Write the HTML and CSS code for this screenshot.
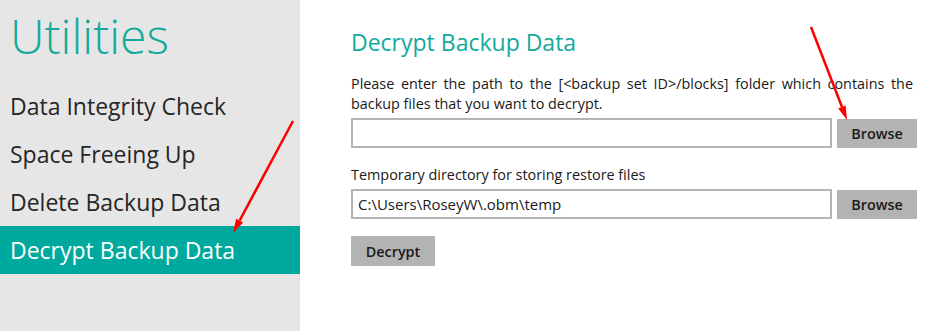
FILE: index.html
```html
<!DOCTYPE html>
<html lang="en">
<head>
    <meta charset="UTF-8">
    <meta name="viewport" content="width=device-width, initial-scale=1.0">
    <title>Utilities - Decrypt Backup Data</title>
    <link rel="stylesheet" href="styles.css">
</head>
<body>
    <div class="app">
        <aside class="sidebar">
            <h1 class="sidebar-title">Utilities</h1>
            <ul class="menu">
                <li class="menu-item">Data Integrity Check</li>
                <li class="menu-item">Space Freeing Up</li>
                <li class="menu-item">Delete Backup Data</li>
                <li class="menu-item active">Decrypt Backup Data</li>
            </ul>
        </aside>

        <main class="content">
            <h2 class="content-title">Decrypt Backup Data</h2>
            <p class="hint">Please enter the path to the [&lt;backup set ID&gt;/blocks] folder which contains the backup files that you want to decrypt.</p>
            <div class="path-row">
                <input class="path-input" type="text" value="">
                <button class="btn">Browse</button>
            </div>

            <p class="label">Temporary directory for storing restore files</p>
            <div class="path-row">
                <input class="path-input" type="text" value="C:\Users\RoseyW\.obm\temp">
                <button class="btn">Browse</button>
            </div>

            <button class="btn btn-decrypt">Decrypt</button>
        </main>

        <!-- annotation arrows -->
        <svg class="arrows" width="943" height="331" viewBox="0 0 943 331">
            <line x1="293" y1="121" x2="239.6" y2="220.6" stroke="#ff0000" stroke-width="2.5"/>
            <polygon points="233,233 243.1,222.5 236.1,218.8" fill="#ff0000"/>
            <line x1="811" y1="27" x2="842" y2="107" stroke="#ff0000" stroke-width="2.5"/>
            <polygon points="847,120 845.7,105.5 838.2,108.4" fill="#ff0000"/>
        </svg>
    </div>
</body>
</html>
```

FILE: styles.css
```css
body {
    margin: 0;
    font-family: 'Open Sans', 'DejaVu Sans', sans-serif;
    background: #ffffff;
    color: #1a1a1a;
}

.app {
    position: relative;
    display: flex;
    width: 943px;
    height: 331px;
    overflow: hidden;
}

.sidebar {
    width: 300px;
    flex-shrink: 0;
    background: #e6e6e6;
}

.sidebar-title {
    margin: 0;
    padding: 5px 0 0 10px;
    height: 82px;
    box-sizing: border-box;
    font-size: 48px;
    font-weight: 300;
    color: #13aa9d;
    line-height: 62px;
}

.menu {
    list-style: none;
    margin: 0;
    padding: 0;
}

.menu-item {
    height: 48px;
    line-height: 48px;
    padding-left: 10px;
    font-size: 23px;
    font-weight: 400;
    color: #262626;
}

.menu-item.active {
    background: #00a99d;
    color: #ffffff;
}

.content {
    flex: 1;
    padding: 26px 26px 0 51px;
}

.content-title {
    margin: 0;
    font-size: 23px;
    font-weight: 400;
    color: #13aa9d;
    line-height: 32px;
}

.hint {
    margin: 16px 4px 0 0;
    font-size: 14.4px;
    line-height: 20px;
    text-align: justify;
    color: #1a1a1a;
}

.label {
    margin: 17px 0 0;
    font-size: 14.4px;
    line-height: 20px;
    color: #1a1a1a;
}

.path-row {
    display: flex;
    align-items: flex-start;
    gap: 5px;
    margin-top: 4px;
}

.path-input {
    flex: 1;
    height: 30px;
    box-sizing: border-box;
    border: 2px solid #b4b4b4;
    padding: 0 5px;
    font-family: inherit;
    font-size: 15px;
    color: #1a1a1a;
    outline: none;
}

.btn {
    width: 80px;
    height: 29px;
    margin-top: 1px;
    background: #b3b3b3;
    border: none;
    font-family: inherit;
    font-size: 14.4px;
    font-weight: 600;
    color: #1a1a1a;
    padding: 0;
    cursor: pointer;
}

.btn-decrypt {
    width: 84px;
    height: 30px;
    margin-top: 17px;
}

.arrows {
    position: absolute;
    left: 0;
    top: 0;
    pointer-events: none;
}
```
